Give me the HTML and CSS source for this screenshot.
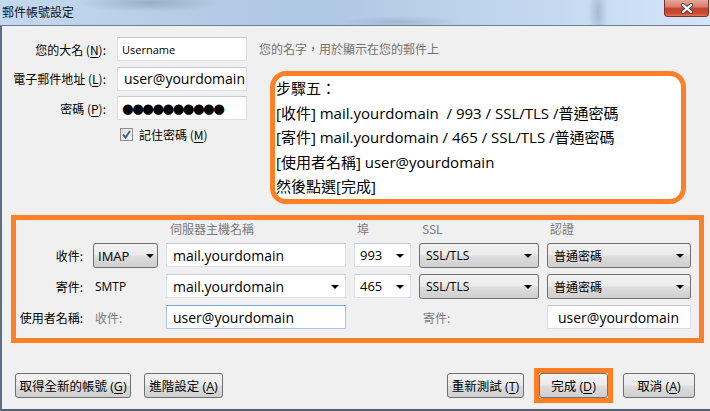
FILE: index.html
```html
<!DOCTYPE html>
<html lang="zh-Hant">
<head>
    <meta charset="UTF-8">
    <title>郵件帳號設定</title>
    <link rel="stylesheet" href="styles.css">
</head>
<body>
    <div class="window">
        <!-- Barra de título -->
        <div class="titlebar">
            <span class="title">郵件帳號設定</span>
            <div class="close">
                <svg width="14" height="11" viewBox="0 0 14 11">
                    <path d="M3 2 L11 9 M11 2 L3 9" stroke="#4a4a4a" stroke-width="4" stroke-linecap="round"/>
                    <path d="M3 2 L11 9 M11 2 L3 9" stroke="#ffffff" stroke-width="2.2" stroke-linecap="round"/>
                </svg>
            </div>
        </div>

        <div class="content">
            <div class="top">
                <div class="ident">
                    <span class="lbl">您的大名 (<u>N</u>):</span>
                    <div class="field small">Username</div>
                    <span class="lbl">電子郵件地址 (<u>L</u>):</span>
                    <div class="field">user@yourdomain</div>
                    <span class="lbl">密碼 (<u>P</u>):</span>
                    <div class="field dots">●●●●●●●●●●</div>
                    <div class="remember">
                        <span class="check">
                            <svg width="11" height="11" viewBox="0 0 11 11">
                                <path d="M2 5.5 L4.5 8.5 L9 2" fill="none" stroke="#4b5f86" stroke-width="2"/>
                            </svg>
                        </span>
                        記住密碼 (<u>M</u>)
                    </div>
                </div>
                <div class="side">
                    <div class="hint">您的名字，用於顯示在您的郵件上</div>
                    <div class="note">
                        步驟五：<br>
                        [收件] mail.yourdomain &nbsp;/ 993 / SSL/TLS /普通密碼<br>
                        [寄件] mail.yourdomain / 465 / SSL/TLS /普通密碼<br>
                        [使用者名稱] user@yourdomain<br>
                        然後點選[完成]
                    </div>
                </div>
            </div>

            <div class="servers">
                <span></span>
                <span></span>
                <span class="head">伺服器主機名稱</span>
                <span class="head">埠</span>
                <span class="head">SSL</span>
                <span class="head">認證</span>

                <span class="lbl">收件:</span>
                <div class="drop imap">IMAP<i class="caret"></i></div>
                <div class="field">mail.yourdomain</div>
                <div class="field combo port">993<i class="caret"></i></div>
                <div class="drop">SSL/TLS<i class="caret"></i></div>
                <div class="drop">普通密碼<i class="caret"></i></div>

                <span class="lbl">寄件:</span>
                <span class="plain">SMTP</span>
                <div class="field combo">mail.yourdomain<i class="caret"></i></div>
                <div class="field combo port">465<i class="caret"></i></div>
                <div class="drop">SSL/TLS<i class="caret"></i></div>
                <div class="drop">普通密碼<i class="caret"></i></div>

                <span class="lbl">使用者名稱:</span>
                <span class="plain dim">收件:</span>
                <div class="field focus">user@yourdomain</div>
                <span></span>
                <span class="plain dim">寄件:</span>
                <div class="field wide-pad">user@yourdomain</div>
            </div>

            <div class="buttons">
                <div class="group">
                    <button class="btn new-acc">取得全新的帳號 (<u>G</u>)</button>
                    <button class="btn advanced">進階設定 (<u>A</u>)</button>
                </div>
                <div class="group">
                    <button class="btn retest">重新測試 (<u>T</u>)</button>
                    <span class="mark"><button class="btn done">完成 (<u>D</u>)</button></span>
                    <button class="btn cancel">取消 (<u>A</u>)</button>
                </div>
            </div>
        </div>
    </div>
</body>
</html>
```

FILE: styles.css
```css
* {
    box-sizing: border-box;
}

body {
    margin: 0;
    width: 710px;
    height: 411px;
    overflow: hidden;
    background: #f0f0f0;
    font-family: "Open Sans", "Noto Sans CJK TC", sans-serif;
    font-size: 12px;
    color: #000;
}

.window {
    height: 411px;
    display: flex;
    flex-direction: column;
}

/* ===== Barra de título ===== */
.titlebar {
    height: 26px;
    flex: none;
    display: flex;
    justify-content: space-between;
    align-items: flex-start;
    border-bottom: 1px solid #6c7e94;
    background:
        radial-gradient(ellipse 70px 9px at 150px 3px, rgba(110, 135, 160, 0.45), transparent),
        radial-gradient(ellipse 60px 6px at 400px 22px, rgba(120, 145, 170, 0.35), transparent),
        radial-gradient(ellipse 10px 30px at 598px 12px, rgba(120, 145, 170, 0.45), transparent),
        linear-gradient(to right, #c4d9ef 0%, #b5cde7 25%, #aec7e2 45%, #bcd3ec 65%, #c9ddf2 85%, #d3e5f7 100%);
}

.title {
    padding: 3px 0 0 2px;
    font-family: "Noto Sans CJK TC", sans-serif;
    font-size: 12px;
    line-height: 18px;
    color: #111;
}

.close {
    width: 45px;
    height: 17px;
    margin-right: 1px;
    display: flex;
    justify-content: center;
    align-items: center;
    border: 1px solid #7a3328;
    border-top: none;
    border-radius: 0 0 4px 4px;
    background: linear-gradient(to bottom, #e8a89b 0%, #d7806f 40%, #c2412b 55%, #d24a33 85%, #e27a5e 100%);
}

/* ===== Contenido ===== */
.content {
    flex: 1;
    display: flex;
    flex-direction: column;
    border-left: 2px solid #5d6f84;
    border-bottom: 2px solid #4f6175;
}

.top {
    display: flex;
    padding-top: 11px;
}

.ident {
    display: grid;
    grid-template-columns: 104px 130px;
    grid-auto-rows: 24px;
    column-gap: 11px;
    row-gap: 5.5px;
    align-content: start;
}

.lbl {
    font-family: "Noto Sans CJK TC", sans-serif;
    font-size: 12px;
    text-align: right;
    align-self: center;
    white-space: nowrap;
}

.lbl u, .remember u, .btn u {
    text-decoration-thickness: 1px;
    text-underline-offset: 2px;
}

.field {
    position: relative;
    height: 24px;
    padding: 0 6px;
    display: flex;
    align-items: center;
    background: #fff;
    border: 1px solid #dcdfe3;
    border-top-color: #c6c9cd;
    font-size: 14px;
    white-space: nowrap;
}

.field.small {
    font-size: 11px;
    padding-left: 4px;
}

.field.dots {
    font-family: "DejaVu Sans", sans-serif;
    font-size: 13.5px;
    letter-spacing: -1.65px;
    padding-left: 4px;
}

.field.focus {
    border-color: #a9c6e8;
    border-top-color: #7ea5d6;
}

.field.wide-pad {
    padding-left: 10px;
}

.field.port {
    padding-left: 5px;
    font-size: 13px;
}

.remember {
    grid-column: 2;
    margin-top: 2px;
    padding-left: 3px;
    display: flex;
    align-items: center;
    height: 14px;
    font-family: "Noto Sans CJK TC", sans-serif;
    font-size: 12px;
}

.check {
    width: 13px;
    height: 13px;
    margin-right: 6px;
    display: flex;
    justify-content: center;
    align-items: center;
    border: 1px solid #8f8f8f;
    background: linear-gradient(to bottom right, #dcdcdc, #fbfbfb);
}

.side {
    margin-left: 12px;
    display: flex;
    flex-direction: column;
}

.hint {
    height: 24px;
    line-height: 24px;
    font-family: "Noto Sans CJK TC", sans-serif;
    color: #707070;
}

.note {
    width: 416px;
    height: 133px;
    margin: 10px 0 0 11px;
    padding: 0 0 0 1px;
    background: #fff;
    border: 5px solid #ff7f27;
    border-radius: 16px;
    font-family: "Open Sans", "Noto Sans CJK TC", sans-serif;
    font-size: 15px;
    line-height: 24.6px;
    white-space: nowrap;
}

/* ===== Servidores ===== */
.servers {
    width: 693px;
    margin: 11px 0 0 9px;
    padding: 0 0 9px 0;
    border: 5px solid #ff7f27;
    display: grid;
    grid-template-columns: 69px 65px 180px 57px 120px 144px;
    grid-template-rows: 16px 24px 24px 24px;
    column-gap: 8px;
    row-gap: 7px;
}

.servers .lbl {
    padding-right: 2px;
}

.head {
    align-self: end;
    padding-left: 3px;
    font-family: "Noto Sans CJK TC", sans-serif;
    font-size: 12px;
    line-height: 14px;
    color: #7a7a7a;
}

.servers .head:nth-child(3) {
    padding-left: 4px;
}

.plain {
    align-self: center;
    padding-left: 2px;
    font-size: 12px;
}

.plain.dim {
    font-family: "Noto Sans CJK TC", sans-serif;
    color: #7a7a7a;
}

.servers .plain.dim:nth-last-child(2) {
    padding-left: 4px;
}

.drop {
    position: relative;
    height: 25px;
    padding: 0 6px;
    display: flex;
    align-items: center;
    border: 1px solid #707070;
    border-radius: 3px;
    background: linear-gradient(to bottom, #f2f2f2 0%, #ebebeb 48%, #dddddd 52%, #cfcfcf 100%);
    font-size: 12px;
    white-space: nowrap;
}

.drop.imap {
    padding-left: 4px;
    font-size: 13px;
}

.caret {
    position: absolute;
    right: 6px;
    top: 10px;
    width: 0;
    height: 0;
    border-left: 4px solid transparent;
    border-right: 4px solid transparent;
    border-top: 4px solid #000;
}

.drop.imap .caret {
    right: 3px;
}

/* ===== Botones ===== */
.buttons {
    display: flex;
    justify-content: space-between;
    padding: 30px 15px 0 13px;
}

.group {
    display: flex;
    gap: 15px;
}

.group:first-child {
    gap: 13px;
}

.btn {
    height: 25px;
    padding: 0;
    border: 1px solid #707070;
    border-radius: 3px;
    background: linear-gradient(to bottom, #f2f2f2 0%, #ebebeb 48%, #dddddd 52%, #cfcfcf 100%);
    font-family: "Open Sans", "Noto Sans CJK TC", sans-serif;
    font-size: 12.5px;
    color: #000;
}

.new-acc { width: 116px; }
.advanced { width: 79px; }
.retest { width: 77px; }
.cancel { width: 72px; }

.mark {
    display: flex;
    margin: -5px;
    border: 5px solid #ff7f27;
}

.done {
    width: 69px;
}
```
